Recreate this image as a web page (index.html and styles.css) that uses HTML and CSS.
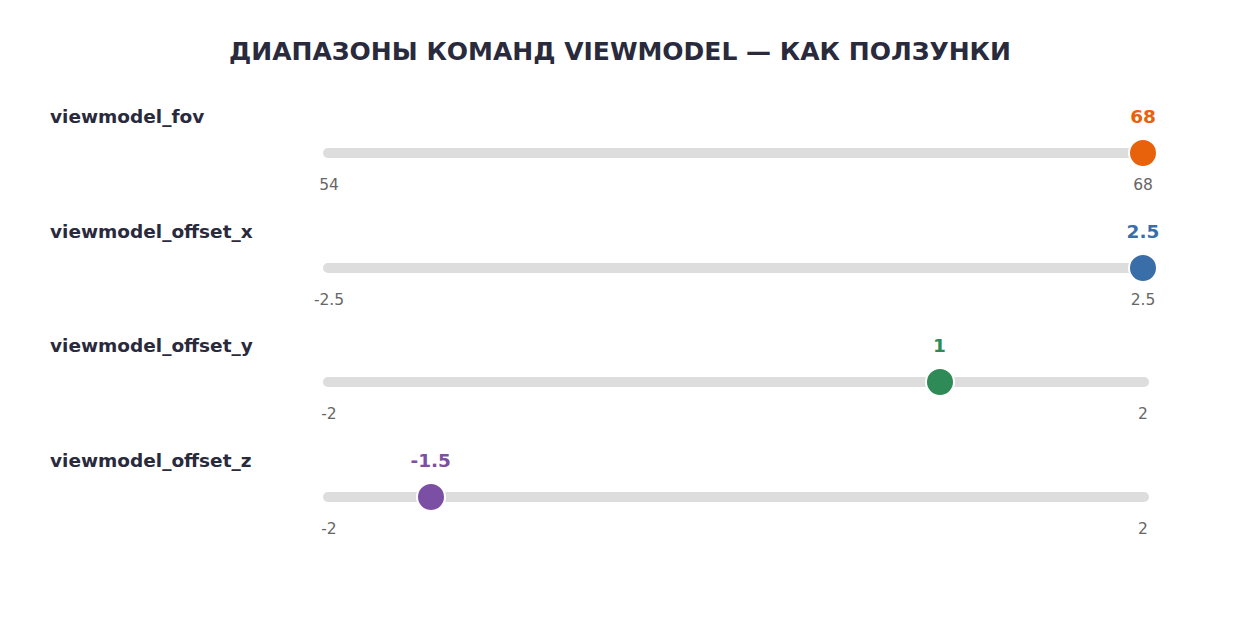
FILE: index.html
```html
<!DOCTYPE html>
<html lang="ru">
<head>
<meta charset="utf-8">
<title>Диапазоны команд viewmodel</title>
<link rel="stylesheet" href="styles.css">
</head>
<body>
<main class="page">
  <h1 class="title">ДИАПАЗОНЫ КОМАНД VIEWMODEL — КАК ПОЛЗУНКИ</h1>
  <section class="rows">
    <div class="row">
      <div class="label">viewmodel_fov</div>
      <div class="slider">
        <div class="value-line"><span class="value c-orange" style="left:calc(6px + (100% - 12px) * 1)">68</span></div>
        <div class="track"><span class="knob bg-orange" style="left:calc(6px + (100% - 12px) * 1)"></span></div>
        <div class="ticks"><span class="tick">54</span><span class="tick">68</span></div>
      </div>
    </div>
    <div class="row">
      <div class="label">viewmodel_offset_x</div>
      <div class="slider">
        <div class="value-line"><span class="value c-blue" style="left:calc(6px + (100% - 12px) * 1)">2.5</span></div>
        <div class="track"><span class="knob bg-blue" style="left:calc(6px + (100% - 12px) * 1)"></span></div>
        <div class="ticks"><span class="tick">-2.5</span><span class="tick">2.5</span></div>
      </div>
    </div>
    <div class="row">
      <div class="label">viewmodel_offset_y</div>
      <div class="slider">
        <div class="value-line"><span class="value c-green" style="left:calc(6px + (100% - 12px) * 0.75)">1</span></div>
        <div class="track"><span class="knob bg-green" style="left:calc(6px + (100% - 12px) * 0.75)"></span></div>
        <div class="ticks"><span class="tick">-2</span><span class="tick">2</span></div>
      </div>
    </div>
    <div class="row">
      <div class="label">viewmodel_offset_z</div>
      <div class="slider">
        <div class="value-line"><span class="value c-purple" style="left:calc(6px + (100% - 12px) * 0.125)">-1.5</span></div>
        <div class="track"><span class="knob bg-purple" style="left:calc(6px + (100% - 12px) * 0.125)"></span></div>
        <div class="ticks"><span class="tick">-2</span><span class="tick">2</span></div>
      </div>
    </div>
  </section>
</main>
</body>
</html>
```

FILE: styles.css
```css
html, body {
  margin: 0;
  padding: 0;
  background: #ffffff;
}

body {
  font-family: "DejaVu Sans", Verdana, sans-serif;
  color: #2a2a3d;
  width: 1240px;
  height: 625px;
  overflow: hidden;
}

.page {
  display: flex;
  flex-direction: column;
  padding-top: 37px;
}

.title {
  margin: 0;
  font-size: 25px;
  line-height: 30px;
  font-weight: bold;
  text-align: center;
  color: #2a2a3d;
}

.rows {
  display: flex;
  flex-direction: column;
  margin-top: 38px;
}

.row {
  display: flex;
  height: 114.67px;
  padding-left: 50px;
}

.label {
  width: 273px;
  flex: none;
  font-size: 18.5px;
  line-height: 24px;
  font-weight: bold;
  color: #2a2a3d;
}

.slider {
  width: 826px;
  flex: none;
  display: flex;
  flex-direction: column;
}

.value-line {
  position: relative;
  height: 24px;
}

.value {
  position: absolute;
  top: 0;
  transform: translateX(-50%);
  font-size: 18.5px;
  line-height: 24px;
  font-weight: bold;
  white-space: nowrap;
}

.track {
  position: relative;
  margin-top: 19px;
  height: 10px;
  border-radius: 5px;
  background: #dddddd;
}

.knob {
  position: absolute;
  top: 50%;
  width: 26px;
  height: 26px;
  border: 2px solid #ffffff;
  border-radius: 50%;
  transform: translate(-50%, -50%);
}

.ticks {
  display: flex;
  justify-content: space-between;
  margin: 17px 6px 0;
}

.tick {
  width: 0;
  display: flex;
  justify-content: center;
  white-space: nowrap;
  font-size: 15.5px;
  line-height: 20px;
  color: #666666;
}

.c-orange { color: #e8620c; }
.c-blue { color: #3a6ea8; }
.c-green { color: #2e8b57; }
.c-purple { color: #7b4fa3; }

.bg-orange { background: #e8620c; }
.bg-blue { background: #3a6ea8; }
.bg-green { background: #2e8b57; }
.bg-purple { background: #7b4fa3; }
```
